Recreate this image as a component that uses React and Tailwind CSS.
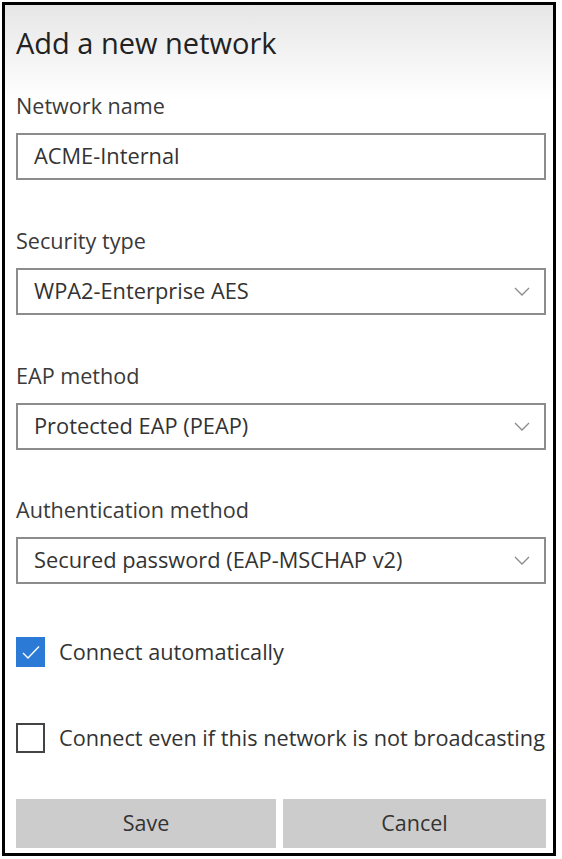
import React from 'react';

const font = { fontFamily: '"Open Sans", "Noto Sans", Arial, sans-serif' };

function Chevron() {
  return (
    <svg width="16" height="9" viewBox="0 0 16 9" className="shrink-0">
      <path d="M1 1l7 7 7-7" fill="none" stroke="#8a8a8a" strokeWidth="1.3" />
    </svg>
  );
}

function Field({ label, value, select, mt = 'mt-[47px]' }) {
  return (
    <>
      <div className={`${mt} h-[28px] leading-[28px] text-[21.6px] text-[#3a3a3a]`}>{label}</div>
      <div className="mt-[13px] h-[47px] border-2 border-[#8c8c8c] bg-white flex items-center pl-[16px] pr-[14px]">
        <span className="flex-1 text-[21.8px] text-[#333] whitespace-nowrap">{value}</span>
        {select && <Chevron />}
      </div>
    </>
  );
}

export default function App() {
  return (
    <div className="bg-white w-[562px] h-[859px] pt-[2px] pl-[2px]" style={font}>
      <div className="w-[554px] h-[854px] border-[3px] border-black bg-[linear-gradient(to_bottom,#e6e6e6,#ffffff_95px)] pl-[11px] pr-[7px] flex flex-col">
        <h1 className="mt-[20px] h-[36px] leading-[36px] text-[29px] text-[#222] font-normal">Add a new network</h1>

        <Field label="Network name" value="ACME-Internal" mt="mt-[31px]" />
        <Field label="Security type" value="WPA2-Enterprise AES" select />
        <Field label="EAP method" value="Protected EAP (PEAP)" select />
        <Field label="Authentication method" value="Secured password (EAP-MSCHAP v2)" select mt="mt-[46px]" />

        {/* checkboxes */}
        <label className="mt-[53px] h-[30px] flex items-center gap-[14px]">
          <span className="w-[29px] h-[30px] bg-[#2b7bd6] flex items-center justify-center">
            <svg width="20" height="16" viewBox="0 0 20 16">
              <path d="M2 9l5 5L18 2.5" fill="none" stroke="#fff" strokeWidth="1.4" />
            </svg>
          </span>
          <span className="text-[21.7px] text-[#333]">Connect automatically</span>
        </label>
        <label className="mt-[56px] h-[30px] flex items-center gap-[14px]">
          <span className="w-[29px] h-[30px] border-2 border-[#444] bg-white" />
          <span className="text-[21.7px] text-[#333] whitespace-nowrap">Connect even if this network is not broadcasting</span>
        </label>

        {/* buttons */}
        <div className="mt-[46px] flex gap-[7px]">
          <button className="w-[260px] h-[49px] bg-[#cccccc] text-[21.5px] text-[#333]">Save</button>
          <button className="flex-1 h-[49px] bg-[#cccccc] text-[21.5px] text-[#333]">Cancel</button>
        </div>
      </div>
    </div>
  );
}
